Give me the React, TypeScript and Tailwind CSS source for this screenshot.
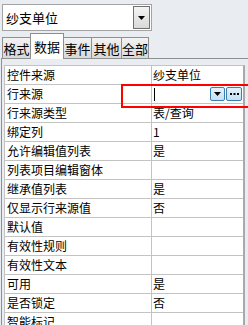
import * as React from 'react';

// property sheet rows: [label, value]
const rows: Array<[string, string]> = [
    ['控件来源', '纱支单位'],
    ['行来源', ''],
    ['行来源类型', '表/查询'],
    ['绑定列', '1'],
    ['允许编辑值列表', '是'],
    ['列表项目编辑窗体', ''],
    ['继承值列表', '是'],
    ['仅显示行来源值', '否'],
    ['默认值', ''],
    ['有效性规则', ''],
    ['有效性文本', ''],
    ['可用', '是'],
    ['是否锁定', '否'],
    ['智能标记', '']
];

const tabs = [
    { label: '格式', w: 'w-[29px]' },
    { label: '数据', w: 'w-[34px]', active: true },
    { label: '事件', w: 'w-[29px]' },
    { label: '其他', w: 'w-[31px]' },
    { label: '全部', w: 'w-[28px]' }
];

function DownArrow() {
    return (
        <svg width="7" height="4" viewBox="0 0 7 4">
            <path d="M0 0h7L3.5 4z" fill="#000" />
        </svg>
    );
}

function Dots() {
    return (
        <svg width="9" height="2" viewBox="0 0 9 2">
            <rect x="0" y="0" width="2" height="2" fill="#000" />
            <rect x="3.5" y="0" width="2" height="2" fill="#000" />
            <rect x="7" y="0" width="2" height="2" fill="#000" />
        </svg>
    );
}

export default function App() {
    return (
        <div
            className="relative h-[325px] w-[248px] overflow-hidden bg-[#e9ecf1] text-black"
            style={{ fontFamily: '"Noto Sans CJK SC", "Liberation Sans", sans-serif' }}>
            {/* object combo */}
            <div className="ml-[2px] mt-[4px] flex h-[27px] w-[150px] items-center border border-[#a3a3a3] bg-white">
                <span className="flex-1 pl-[3px] text-[13px] leading-none">纱支单位</span>
                <div className="mr-[1px] flex h-[23px] w-[17px] items-center justify-center border border-[#707070] bg-gradient-to-b from-[#f4f4f4] to-[#d9d9d9]">
                    <DownArrow />
                </div>
            </div>

            {/* tabs */}
            <div className="ml-[2px] mt-[2px] flex h-[25px] items-end">
                {tabs.map(tab =>
                    tab.active ? (
                        <div
                            key={tab.label}
                            className={`relative z-10 -mb-px -ml-px flex h-[26px] ${tab.w} items-center justify-center border border-b-0 border-[#8e8f8f] bg-white text-[13px] leading-none`}>
                            {tab.label}
                        </div>
                    ) : (
                        <div
                            key={tab.label}
                            className={`-ml-px flex h-[21px] first:ml-0 ${tab.w} items-center justify-center border border-b-0 border-[#8e8f8f] bg-gradient-to-b from-[#f3f3f3] to-[#d8d8d8] text-[13px] leading-none`}>
                            {tab.label}
                        </div>
                    )
                )}
            </div>

            {/* panel */}
            <div className="ml-[1px] border-l border-t border-[#8e8f8f] pt-[6px]">
                <div className="ml-[2px] w-[241px] border-l border-r-2 border-t border-[#c3c3c3] border-r-[#a9a9a9] bg-white">
                    {rows.map(([label, value], i) => (
                        <div key={label} className="flex h-[19px] border-b border-[#c3c3c3]">
                            <div className="flex w-[147px] shrink-0 items-center border-r border-[#c3c3c3] pl-[2px] text-[12px] leading-none">
                                {label}
                            </div>
                            <div className="flex flex-1 items-center pl-[1px] text-[12px] leading-none">
                                {i === 1 ? (
                                    <div className="flex w-full items-center">
                                        <div className="ml-[1px] h-[13px] w-px shrink-0 bg-black" />
                                        <div className="ml-auto flex shrink-0 gap-[1px] pr-[1px]">
                                            <div className="flex h-[14px] w-[15px] shrink-0 items-center justify-center rounded-[2px] border border-[#3c7fb1] bg-gradient-to-b from-[#e5f1fb] to-[#c4e0f6]">
                                                <DownArrow />
                                            </div>
                                            <div className="flex h-[14px] w-[16px] shrink-0 items-center justify-center rounded-[2px] border border-[#3c7fb1] bg-gradient-to-b from-[#e5f1fb] to-[#c4e0f6]">
                                                <Dots />
                                            </div>
                                        </div>
                                    </div>
                                ) : (
                                    value
                                )}
                            </div>
                        </div>
                    ))}
                </div>
            </div>

            {/* red highlight annotation */}
            <div className="absolute left-[121px] top-[84px] h-[24px] w-[140px] border-2 border-[#ff0000]" />
        </div>
    );
}
